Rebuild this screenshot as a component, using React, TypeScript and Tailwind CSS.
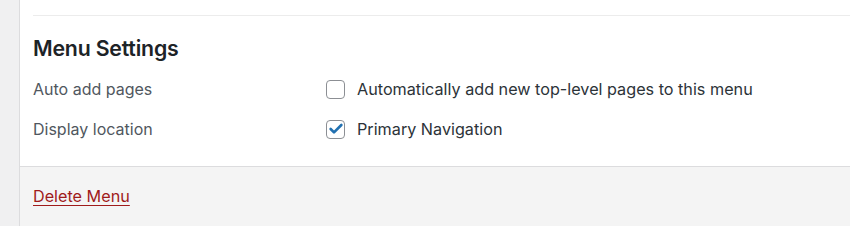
import { Check } from "lucide-react";

const font = { fontFamily: "Inter, 'Noto Sans', sans-serif" };

function Box({ checked }: { checked?: boolean }) {
  return (
    <span className="flex h-[19px] w-[19px] shrink-0 items-center justify-center rounded-[4px] border border-[#8c8f94] bg-white">
      {checked && <Check size={16} strokeWidth={4} className="text-[#2271b1]" />}
    </span>
  );
}

export default function App() {
  return (
    <div className="flex h-[226px] w-[850px] bg-[#f0f0f1] text-[#1d2327]" style={font}>
      <div className="w-[20px] shrink-0 border-r border-[#dcdcde]" />
      <div className="flex flex-1 flex-col">
        <div className="h-[167px] border-b border-[#dcdcde] bg-white pl-[13px]">
          <div className="mt-[15px] border-t border-[#ececec]" />
          <h3 className="mt-[20px] text-[21.3px] font-semibold leading-[24px] tracking-[-0.2px]">Menu Settings</h3>
          <div className="mt-[18px] flex h-[22px] items-center">
            <div className="w-[293px] text-[16px] text-[#50575e]">Auto add pages</div>
            <label className="flex items-center gap-[12px] text-[16.2px] text-[#2c3338]">
              <Box />
              Automatically add new top-level pages to this menu
            </label>
          </div>
          <div className="mt-[18px] flex h-[22px] items-center">
            <div className="w-[293px] text-[16px] text-[#50575e]">Display location</div>
            <label className="flex items-center gap-[12px] text-[16.2px] text-[#2c3338]">
              <Box checked />
              Primary Navigation
            </label>
          </div>
        </div>
        <div className="flex flex-1 items-center bg-[#f4f4f4] pl-[13px]">
          <a href="#" className="text-[16.2px] text-[#a01b1b] underline underline-offset-[3px]">Delete Menu</a>
        </div>
      </div>
    </div>
  );
}
